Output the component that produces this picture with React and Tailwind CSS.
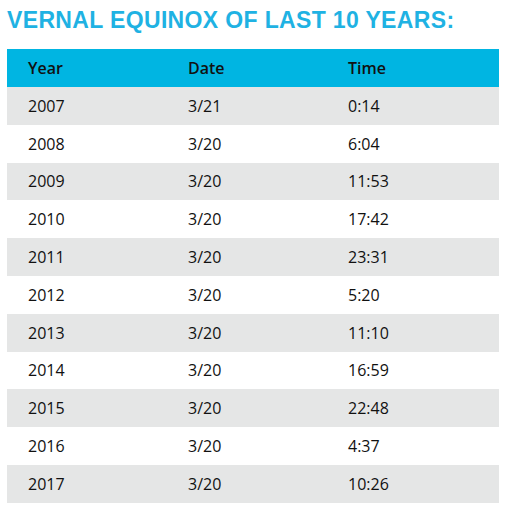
const ROWS = [
  ['2007', '3/21', '0:14'],
  ['2008', '3/20', '6:04'],
  ['2009', '3/20', '11:53'],
  ['2010', '3/20', '17:42'],
  ['2011', '3/20', '23:31'],
  ['2012', '3/20', '5:20'],
  ['2013', '3/20', '11:10'],
  ['2014', '3/20', '16:59'],
  ['2015', '3/20', '22:48'],
  ['2016', '3/20', '4:37'],
  ['2017', '3/20', '10:26'],
];

export default function App() {
  return (
    <div className="w-[509px] h-[509px] bg-white pt-[5px] pl-[7px] pr-[10px]" style={{ fontFamily: '"Open Sans", sans-serif' }}>
      <h1
        className="text-[23px] leading-[30px] font-bold text-[#1fb2e3] tracking-[0.35px] whitespace-nowrap"
        style={{ fontFamily: '"Liberation Sans", sans-serif' }}
      >
        VERNAL EQUINOX OF LAST 10 YEARS:
      </h1>
      <table className="w-[492px] mt-[14px] text-[16px] text-[#111]">
        <thead>
          <tr className="bg-[#00b5e2] h-[38px]">
            <th className="w-[160px] pl-[21px] text-left font-semibold">Year</th>
            <th className="w-[160px] pl-[21px] text-left font-semibold">Date</th>
            <th className="pl-[21px] text-left font-semibold">Time</th>
          </tr>
        </thead>
        <tbody>
          {ROWS.map((r, i) => (
            <tr key={r[0]} className={i % 2 === 0 ? 'bg-[#e5e6e6] h-[37.8px]' : 'bg-white h-[37.8px]'}>
              {r.map((c, j) => (
                <td key={j} className="pl-[21px]">{c}</td>
              ))}
            </tr>
          ))}
        </tbody>
      </table>
    </div>
  );
}
